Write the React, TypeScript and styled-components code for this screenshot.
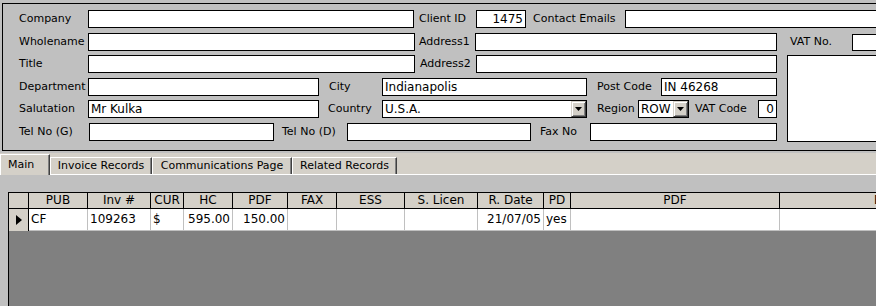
import styled, { createGlobalStyle } from "styled-components";

const GlobalStyle = createGlobalStyle`
  html, body {
    margin: 0;
    padding: 0;
    background: #c0c0c0;
    overflow: hidden;
  }
  body {
    font-family: "DejaVu Sans", Verdana, sans-serif;
    font-size: 11px;
    color: #000;
  }
  #root {
    width: 876px;
    height: 306px;
    display: flex;
    flex-direction: column;
    overflow: hidden;
  }
`;

const Panel = styled.div`
  box-sizing: border-box;
  flex-shrink: 0;
  width: 920px;
  height: 148px;
  margin: 3px 0 0 2px;
  padding: 6px 0 0 15px;
  border: 1px solid #000;
  display: flex;
  flex-direction: column;
`;

const Lower = styled.div`
  display: flex;
`;

const LeftBlock = styled.div`
  width: 759px;
  display: flex;
  flex-direction: column;
`;

const RightBlock = styled.div`
  display: flex;
  flex-direction: column;
  margin-top: 5px;
`;

const Row = styled.div<{ $mt?: number }>`
  display: flex;
  align-items: center;
  height: 18px;
  margin-top: ${(p) => p.$mt ?? 0}px;
`;

const Label = styled.div<{ $w: number; $pl?: number }>`
  box-sizing: border-box;
  flex-shrink: 0;
  width: ${(p) => p.$w}px;
  padding-left: ${(p) => p.$pl ?? 1}px;
  white-space: nowrap;
  line-height: 18px;
`;

const Box = styled.div<{ $w: number; $h?: number; $align?: string }>`
  box-sizing: border-box;
  flex-shrink: 0;
  width: ${(p) => p.$w}px;
  height: ${(p) => p.$h ?? 18}px;
  border: 1px solid #000;
  background: #fff;
  padding: 0 2px;
  font-size: 12px;
  line-height: 16px;
  text-align: ${(p) => p.$align ?? "left"};
  white-space: nowrap;
  overflow: hidden;
`;

const Memo = styled.div`
  box-sizing: border-box;
  width: 120px;
  height: 87px;
  margin: 4px 0 0 10px;
  border: 1px solid #000;
  background: #fff;
`;

const Combo = styled.div<{ $w: number }>`
  box-sizing: border-box;
  flex-shrink: 0;
  width: ${(p) => p.$w}px;
  height: 18px;
  border: 1px solid #000;
  background: #fff;
  display: flex;
  align-items: center;
  font-size: 12px;
`;

const ComboText = styled.span`
  flex: 1;
  padding-left: 2px;
  line-height: 16px;
  white-space: nowrap;
  overflow: hidden;
`;

const DropButton = styled.div`
  box-sizing: border-box;
  width: 15px;
  height: 16px;
  background: #d4d0c8;
  border-top: 1px solid #d4d0c8;
  border-left: 1px solid #d4d0c8;
  border-right: 1px solid #404040;
  border-bottom: 1px solid #404040;
  box-shadow: inset 1px 1px #fff, inset -1px -1px #808080;
  display: flex;
  align-items: center;
  justify-content: center;
`;

const TabStrip = styled.div`
  box-sizing: border-box;
  flex-shrink: 0;
  height: 22px;
  margin-top: 2px;
  background: #d4d0c8;
  border-bottom: 1px solid #fff;
  display: flex;
  align-items: flex-end;
`;

const Tab = styled.div<{ $w: number; $active?: boolean }>`
  box-sizing: border-box;
  width: ${(p) => p.$w}px;
  height: ${(p) => (p.$active ? 21 : 17)}px;
  margin-bottom: ${(p) => (p.$active ? -1 : 0)}px;
  background: #d4d0c8;
  border-top: 1px solid #fff;
  border-left: 1px solid #fff;
  border-right: 1px solid #404040;
  box-shadow: inset -1px 0 #808080;
  padding: ${(p) => (p.$active ? "3px 0 0 7px" : "1px 0 0")};
  text-align: ${(p) => (p.$active ? "left" : "center")};
  line-height: 14px;
  white-space: nowrap;
`;

const TabPage = styled.div`
  flex: 1;
  display: flex;
  padding: 17px 0 0 8px;
`;

const Grid = styled.div`
  flex: 1;
  background: #808080;
  border-top: 1px solid #000;
  border-left: 1px solid #000;
  font-size: 12px;
`;

const HeadRow = styled.div`
  display: flex;
  height: 15px;
  border-bottom: 1px solid #000;
  width: 1200px;
`;

const DataRow = styled.div`
  display: flex;
  height: 22px;
  width: 1200px;
`;

const HeadCell = styled.div<{ $w: number }>`
  box-sizing: border-box;
  flex-shrink: 0;
  width: ${(p) => p.$w}px;
  background: #d4d0c8;
  border-right: 1px solid #000;
  text-align: center;
  line-height: 15px;
  white-space: nowrap;
  overflow: hidden;
`;

const Cell = styled.div<{ $w: number; $align?: string }>`
  box-sizing: border-box;
  flex-shrink: 0;
  width: ${(p) => p.$w}px;
  background: #fff;
  border-right: 1px solid #c0c0c0;
  border-bottom: 1px solid #c0c0c0;
  text-align: ${(p) => p.$align ?? "left"};
  padding: 0 2px;
  line-height: 21px;
  white-space: nowrap;
  overflow: hidden;
`;

const Selector = styled.div`
  box-sizing: border-box;
  flex-shrink: 0;
  width: 20px;
  background: #d4d0c8;
  border-right: 1px solid #000;
  display: flex;
  align-items: center;
  justify-content: center;
`;

const columns = [
  { title: "PUB", w: 59, value: "CF", align: "left" },
  { title: "Inv #", w: 63, value: "109263", align: "left" },
  { title: "CUR", w: 33, value: "$", align: "left" },
  { title: "HC", w: 49, value: "595.00", align: "right" },
  { title: "PDF", w: 55, value: "150.00", align: "right" },
  { title: "FAX", w: 49, value: "", align: "left" },
  { title: "ESS", w: 68, value: "", align: "left" },
  { title: "S. Licen", w: 73, value: "", align: "left" },
  { title: "R. Date", w: 66, value: "21/07/05", align: "right" },
  { title: "PD", w: 27, value: "yes", align: "left" },
  { title: "PDF", w: 209, value: "", align: "left" },
  { title: "ESS", w: 212, value: "", align: "left" },
];

function Arrow() {
  return (
    <svg width="7" height="4" viewBox="0 0 7 4">
      <polygon points="0,0 7,0 3.5,4" fill="#000" />
    </svg>
  );
}

function ComboBox({ w, value }: { w: number; value: string }) {
  return (
    <Combo $w={w}>
      <ComboText>{value}</ComboText>
      <DropButton>
        <Arrow />
      </DropButton>
    </Combo>
  );
}

export default function App() {
  return (
    <>
      <GlobalStyle />
      <Panel>
        <Row>
          <Label $w={70}>Company</Label>
          <Box $w={326} />
          <Label $w={62} $pl={5}>Client ID</Label>
          <Box $w={50} $align="right">1475</Box>
          <Label $w={99} $pl={7}>Contact Emails</Label>
          <Box $w={300} />
        </Row>
        <Lower>
          <LeftBlock>
            <Row $mt={5}>
              <Label $w={70}>Wholename</Label>
              <Box $w={327} />
              <Label $w={60} $pl={4}>Address1</Label>
              <Box $w={302} />
            </Row>
            <Row $mt={4}>
              <Label $w={70}>Title</Label>
              <Box $w={327} />
              <Label $w={61} $pl={5}>Address2</Label>
              <Box $w={301} />
            </Row>
            <Row $mt={5}>
              <Label $w={70}>Department</Label>
              <Box $w={231} />
              <Label $w={63} $pl={10}>City</Label>
              <Box $w={205}>Indianapolis</Box>
              <Label $w={74} $pl={10}>Post Code</Label>
              <Box $w={116}>IN 46268</Box>
            </Row>
            <Row $mt={4}>
              <Label $w={70}>Salutation</Label>
              <Box $w={231}>Mr Kulka</Box>
              <Label $w={63} $pl={9}>Country</Label>
              <ComboBox w={205} value="U.S.A." />
              <Label $w={51} $pl={10}>Region</Label>
              <ComboBox w={51} value="ROW" />
              <Label $w={69} $pl={6}>VAT Code</Label>
              <Box $w={19} $align="right">0</Box>
            </Row>
            <Row $mt={5}>
              <Label $w={71}>Tel No (G)</Label>
              <Box $w={185} />
              <Label $w={73} $pl={8}>Tel No (D)</Label>
              <Box $w={184} />
              <Label $w={59} $pl={9}>Fax No</Label>
              <Box $w={187} />
            </Row>
          </LeftBlock>
          <RightBlock>
            <Row>
              <Label $w={75} $pl={13}>VAT No.</Label>
              <Box $w={60} $h={17} />
            </Row>
            <Memo />
          </RightBlock>
        </Lower>
      </Panel>
      <TabStrip>
        <Tab $w={50} $active>Main</Tab>
        <Tab $w={102}>Invoice Records</Tab>
        <Tab $w={140}>Communications Page</Tab>
        <Tab $w={105}>Related Records</Tab>
      </TabStrip>
      <TabPage>
        <Grid>
          <HeadRow>
            <Selector />
            {columns.map((c, i) => (
              <HeadCell key={i} $w={c.w}>
                {c.title}
              </HeadCell>
            ))}
          </HeadRow>
          <DataRow>
            <Selector>
              <svg width="6" height="10" viewBox="0 0 6 10">
                <polygon points="0,0 6,5 0,10" fill="#000" />
              </svg>
            </Selector>
            {columns.map((c, i) => (
              <Cell key={i} $w={c.w} $align={c.align}>
                {c.value}
              </Cell>
            ))}
          </DataRow>
        </Grid>
      </TabPage>
    </>
  );
}
